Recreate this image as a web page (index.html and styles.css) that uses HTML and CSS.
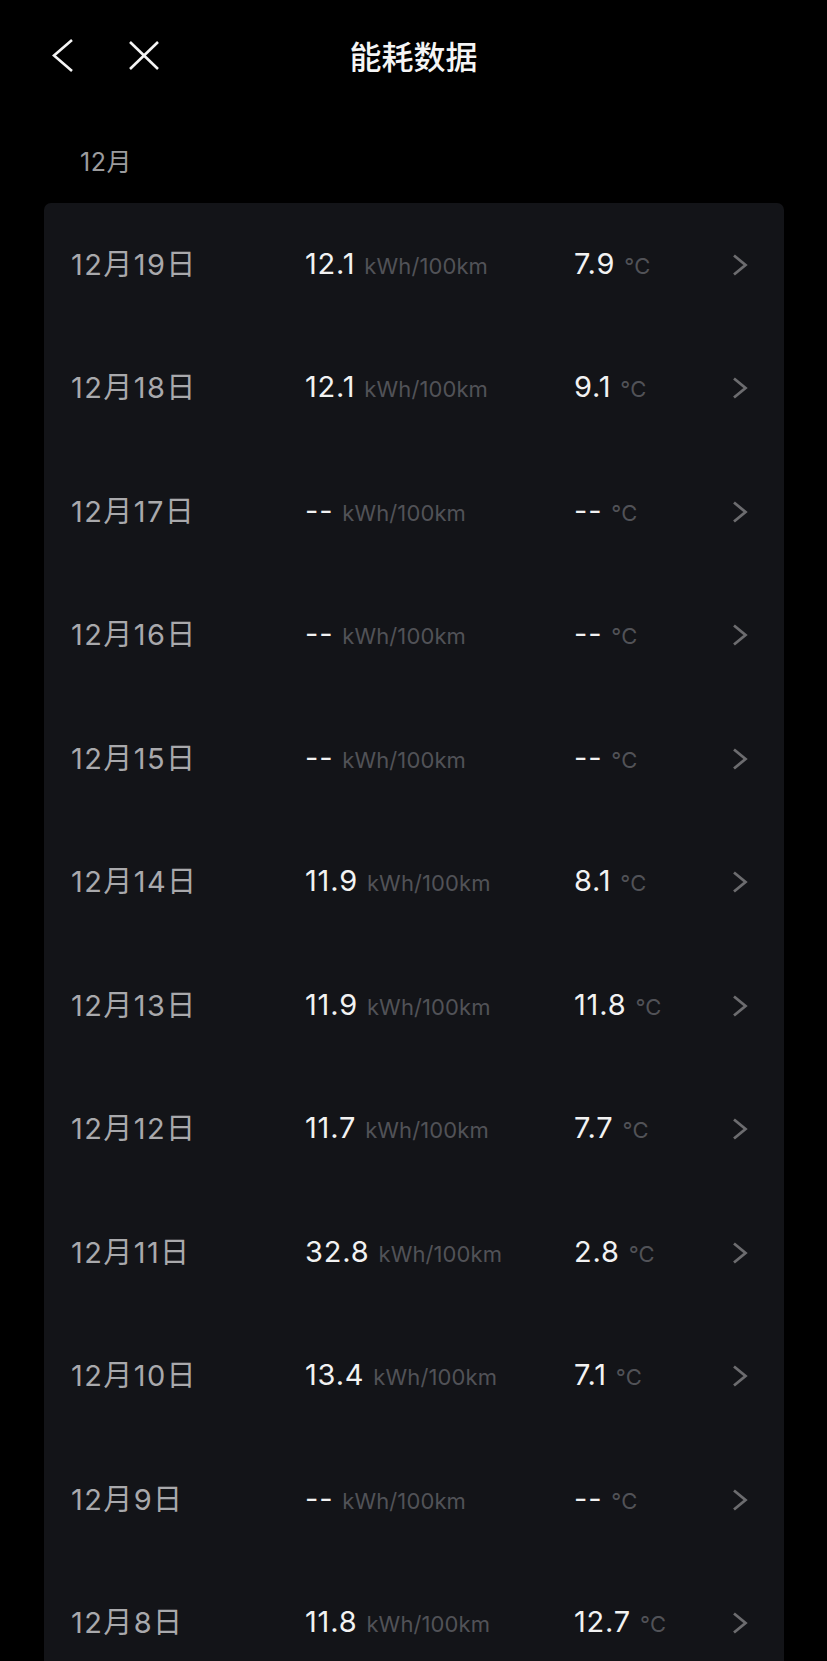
FILE: index.html
```html
<!DOCTYPE html>
<html lang="zh-CN">
<head>
  <meta charset="UTF-8" />
  <meta name="viewport" content="width=device-width, initial-scale=1.0" />
  <title>能耗数据</title>
  <link rel="stylesheet" href="styles.css">
</head>
<body>
  <div class="header">
    <div class="nav">
      <svg class="back" width="28" height="36" viewBox="0 0 28 36">
        <polyline points="24,3 6,18.5 24,34" />
      </svg>
      <svg class="close" width="36" height="36" viewBox="0 0 36 36">
        <line x1="4" y1="5" x2="32" y2="32" />
        <line x1="32" y1="5" x2="4" y2="32" />
      </svg>
    </div>
    <h1>能耗数据</h1>
    <div></div>
  </div>

  <div class="month">12月</div>

  <div class="card">
    <div class="row">
      <span class="date">12月19日</span>
      <span class="val">12.1<small>kWh/100km</small></span>
      <span class="val">7.9<small>°C</small></span>
      <svg class="arrow" width="20" height="24" viewBox="0 0 20 24"><polyline points="4,2.5 15.5,12 4,21.5" /></svg>
    </div>
    <div class="row">
      <span class="date">12月18日</span>
      <span class="val">12.1<small>kWh/100km</small></span>
      <span class="val">9.1<small>°C</small></span>
      <svg class="arrow" width="20" height="24" viewBox="0 0 20 24"><polyline points="4,2.5 15.5,12 4,21.5" /></svg>
    </div>
    <div class="row">
      <span class="date">12月17日</span>
      <span class="val">--<small>kWh/100km</small></span>
      <span class="val">--<small>°C</small></span>
      <svg class="arrow" width="20" height="24" viewBox="0 0 20 24"><polyline points="4,2.5 15.5,12 4,21.5" /></svg>
    </div>
    <div class="row">
      <span class="date">12月16日</span>
      <span class="val">--<small>kWh/100km</small></span>
      <span class="val">--<small>°C</small></span>
      <svg class="arrow" width="20" height="24" viewBox="0 0 20 24"><polyline points="4,2.5 15.5,12 4,21.5" /></svg>
    </div>
    <div class="row">
      <span class="date">12月15日</span>
      <span class="val">--<small>kWh/100km</small></span>
      <span class="val">--<small>°C</small></span>
      <svg class="arrow" width="20" height="24" viewBox="0 0 20 24"><polyline points="4,2.5 15.5,12 4,21.5" /></svg>
    </div>
    <div class="row">
      <span class="date">12月14日</span>
      <span class="val">11.9<small>kWh/100km</small></span>
      <span class="val">8.1<small>°C</small></span>
      <svg class="arrow" width="20" height="24" viewBox="0 0 20 24"><polyline points="4,2.5 15.5,12 4,21.5" /></svg>
    </div>
    <div class="row">
      <span class="date">12月13日</span>
      <span class="val">11.9<small>kWh/100km</small></span>
      <span class="val">11.8<small>°C</small></span>
      <svg class="arrow" width="20" height="24" viewBox="0 0 20 24"><polyline points="4,2.5 15.5,12 4,21.5" /></svg>
    </div>
    <div class="row">
      <span class="date">12月12日</span>
      <span class="val">11.7<small>kWh/100km</small></span>
      <span class="val">7.7<small>°C</small></span>
      <svg class="arrow" width="20" height="24" viewBox="0 0 20 24"><polyline points="4,2.5 15.5,12 4,21.5" /></svg>
    </div>
    <div class="row">
      <span class="date">12月11日</span>
      <span class="val">32.8<small>kWh/100km</small></span>
      <span class="val">2.8<small>°C</small></span>
      <svg class="arrow" width="20" height="24" viewBox="0 0 20 24"><polyline points="4,2.5 15.5,12 4,21.5" /></svg>
    </div>
    <div class="row">
      <span class="date">12月10日</span>
      <span class="val">13.4<small>kWh/100km</small></span>
      <span class="val">7.1<small>°C</small></span>
      <svg class="arrow" width="20" height="24" viewBox="0 0 20 24"><polyline points="4,2.5 15.5,12 4,21.5" /></svg>
    </div>
    <div class="row">
      <span class="date">12月9日</span>
      <span class="val">--<small>kWh/100km</small></span>
      <span class="val">--<small>°C</small></span>
      <svg class="arrow" width="20" height="24" viewBox="0 0 20 24"><polyline points="4,2.5 15.5,12 4,21.5" /></svg>
    </div>
    <div class="row">
      <span class="date">12月8日</span>
      <span class="val">11.8<small>kWh/100km</small></span>
      <span class="val">12.7<small>°C</small></span>
      <svg class="arrow" width="20" height="24" viewBox="0 0 20 24"><polyline points="4,2.5 15.5,12 4,21.5" /></svg>
    </div>
  </div>
</body>
</html>
```

FILE: styles.css
```css
body {
  margin: 0;
  background-color: #000;
  color: #f2f2f2;
  font-family: Inter, "Noto Sans CJK SC", sans-serif;
}
.header {
  height: 110px;
  display: grid;
  grid-template-columns: 1fr auto 1fr;
  align-items: center;
}
.nav {
  display: flex;
  align-items: center;
  gap: 50px;
  padding-left: 48px;
}
.nav svg {
  fill: none;
  stroke: #f5f5f5;
  stroke-width: 2.6;
}
h1 {
  margin: 0;
  font-size: 32px;
  font-weight: 500;
  color: #f5f5f5;
}
.month {
  padding: 38px 0 26px 80px;
  line-height: 29px;
  font-size: 25px;
  letter-spacing: 0.5px;
  color: #9b9b9d;
}
.card {
  margin: 0 43px 0 44px;
  background: #131418;
  border-radius: 7px 7px 0 0;
  padding: 0 34px 0 27px;
}
.row {
  height: 123.5px;
  display: grid;
  grid-template-columns: 234px 269px 1fr 20px;
  align-items: center;
  line-height: 36px;
}
.date {
  font-size: 29px;
  letter-spacing: 1.4px;
  color: #a9a9ac;
}
.val {
  font-size: 29px;
  letter-spacing: 0.8px;
  color: #f2f2f2;
}
.val small {
  font-size: 22px;
  letter-spacing: 0.1px;
  color: #515257;
  margin-left: 9px;
}
.arrow {
  fill: none;
  stroke: #6c6c6f;
  stroke-width: 2.8;
}
```
